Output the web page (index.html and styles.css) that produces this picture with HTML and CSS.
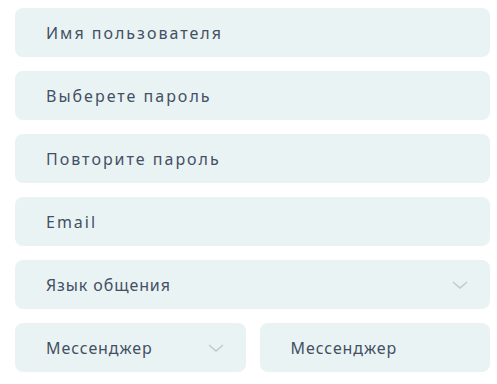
FILE: index.html
```html
<!DOCTYPE html>
<html lang="ru">
<head>
<meta charset="utf-8">
<link rel="stylesheet" href="styles.css">
</head>
<body>
<form class="form">
  <div class="field"><span class="label wide">Имя пользователя</span></div>
  <div class="field"><span class="label wide">Выберете пароль</span></div>
  <div class="field"><span class="label wide">Повторите пароль</span></div>
  <div class="field"><span class="label wide">Email</span></div>
  <div class="field select"><span class="label">Язык общения</span>
    <svg class="chev" width="16" height="8" viewBox="0 0 16 8"><path d="M1 1 L8 7 L15 1" fill="none" stroke="#bccacd" stroke-width="1.4"/></svg>
  </div>
  <div class="row">
    <div class="field select half"><span class="label">Мессенджер</span>
      <svg class="chev" width="16" height="8" viewBox="0 0 16 8"><path d="M1 1 L8 7 L15 1" fill="none" stroke="#bccacd" stroke-width="1.4"/></svg>
    </div>
    <div class="field half"><span class="label">Мессенджер</span></div>
  </div>
</form>
</body>
</html>
```
FILE: styles.css
```css
html, body { margin: 0; padding: 0; background: #ffffff; }
.form {
  display: flex;
  flex-direction: column;
  gap: 14px;
  padding: 8px 7px 0 15px;
  width: 475px;
}
.field {
  height: 49px;
  background: #eaf3f4;
  border-radius: 8px;
  display: flex;
  align-items: center;
  justify-content: space-between;
  padding: 0 22px 0 31px;
  box-sizing: border-box;
}
.label {
  font-family: "Noto Sans", sans-serif;
  font-size: 16px;
  color: #435063;
  letter-spacing: 0.9px;
}
.label.wide { letter-spacing: 2px; }
.row {
  display: flex;
  gap: 14px;
}
.half { flex: 1; }
.half.select { padding-right: 22px; }
.chev { display: block; }
```
